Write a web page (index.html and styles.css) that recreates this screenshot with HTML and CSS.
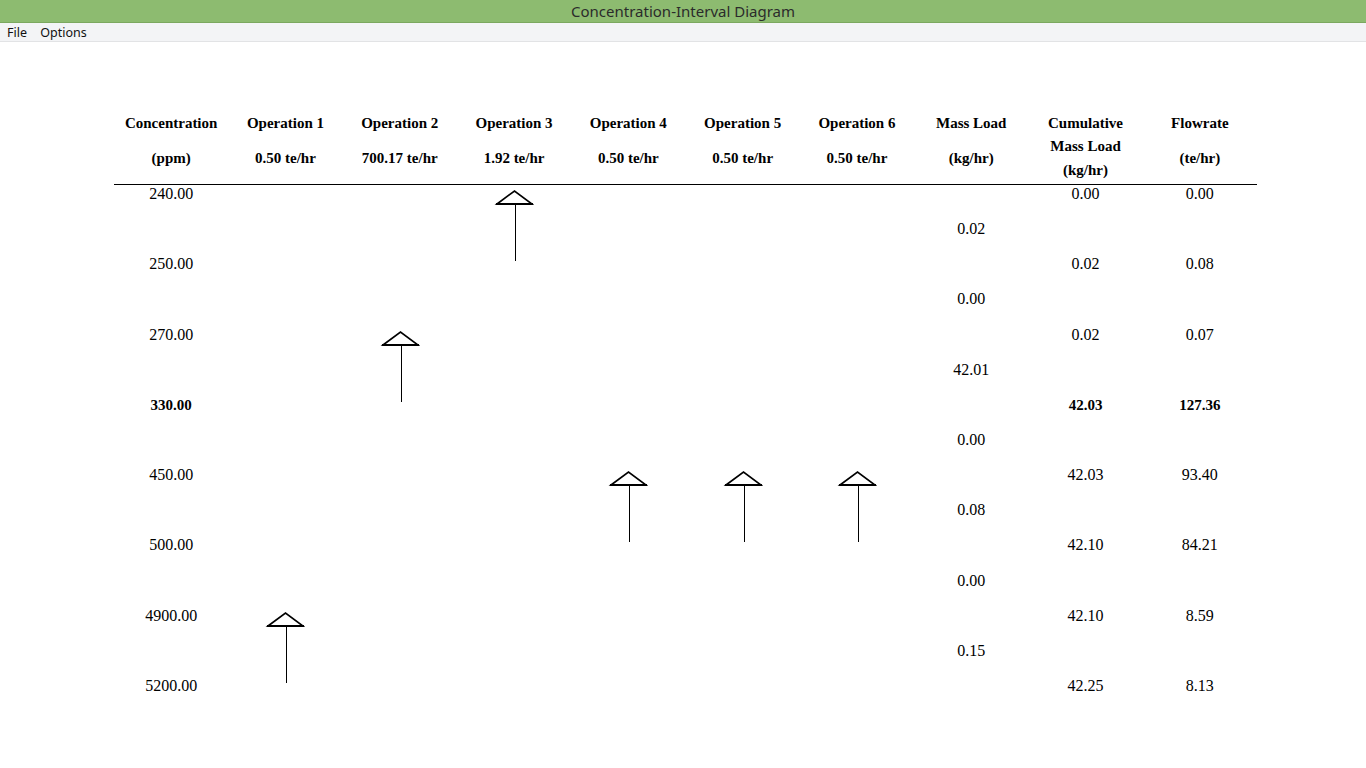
FILE: index.html
```html
<!DOCTYPE html>
<html>
  <head>
    <meta charset="utf-8">
    <meta name="viewport" content="width=device-width, initial-scale=1">
    <title>Concentration-Interval Diagram</title>
    <link rel="stylesheet" href="styles.css">
  </head>
  <body>
    <div class="titlebar">Concentration-Interval Diagram</div>
    <div class="menubar">
      <span class="menu_item">File</span>
      <span class="menu_item">Options</span>
    </div>

    <div class="diagram">
      <!-- header -->
      <div class="diagram_head">
        <div class="hd"><div class="hd_top">Concentration</div><div class="hd_sub">(ppm)</div></div>
        <div class="hd"><div class="hd_top">Operation 1</div><div class="hd_sub">0.50 te/hr</div></div>
        <div class="hd"><div class="hd_top">Operation 2</div><div class="hd_sub">700.17 te/hr</div></div>
        <div class="hd"><div class="hd_top">Operation 3</div><div class="hd_sub">1.92 te/hr</div></div>
        <div class="hd"><div class="hd_top">Operation 4</div><div class="hd_sub">0.50 te/hr</div></div>
        <div class="hd"><div class="hd_top">Operation 5</div><div class="hd_sub">0.50 te/hr</div></div>
        <div class="hd"><div class="hd_top">Operation 6</div><div class="hd_sub">0.50 te/hr</div></div>
        <div class="hd"><div class="hd_top">Mass Load</div><div class="hd_sub">(kg/hr)</div></div>
        <div class="hd"><div class="hd_top">Cumulative</div><div class="hd_sub tight">Mass Load<br>(kg/hr)</div></div>
        <div class="hd"><div class="hd_top">Flowrate</div><div class="hd_sub">(te/hr)</div></div>
      </div>

      <!-- intervals -->
      <div class="diagram_grid">
        <div class="cell k-conc r1">240.00</div>
        <div class="cell k-cum r1">0.00</div>
        <div class="cell k-flow r1">0.00</div>
        <div class="cell k-mass r2">0.02</div>

        <div class="cell k-conc r3">250.00</div>
        <div class="cell k-cum r3">0.02</div>
        <div class="cell k-flow r3">0.08</div>
        <div class="cell k-mass r4">0.00</div>

        <div class="cell k-conc r5">270.00</div>
        <div class="cell k-cum r5">0.02</div>
        <div class="cell k-flow r5">0.07</div>
        <div class="cell k-mass r6">42.01</div>

        <div class="cell k-conc r7 pinch">330.00</div>
        <div class="cell k-cum r7 pinch">42.03</div>
        <div class="cell k-flow r7 pinch">127.36</div>
        <div class="cell k-mass r8">0.00</div>

        <div class="cell k-conc r9">450.00</div>
        <div class="cell k-cum r9">42.03</div>
        <div class="cell k-flow r9">93.40</div>
        <div class="cell k-mass r10">0.08</div>

        <div class="cell k-conc r11">500.00</div>
        <div class="cell k-cum r11">42.10</div>
        <div class="cell k-flow r11">84.21</div>
        <div class="cell k-mass r12">0.00</div>

        <div class="cell k-conc r13">4900.00</div>
        <div class="cell k-cum r13">42.10</div>
        <div class="cell k-flow r13">8.59</div>
        <div class="cell k-mass r14">0.15</div>

        <div class="cell k-conc r15">5200.00</div>
        <div class="cell k-cum r15">42.25</div>
        <div class="cell k-flow r15">8.13</div>

        <!-- operation streams -->
        <div class="arrow op1 r13">
          <svg width="40" height="72" viewBox="0 0 40 72"><polygon points="3,14 20.5,1 38,14" fill="#fff" stroke="#000" stroke-width="1.6"/><line x1="2" y1="14" x2="39" y2="14" stroke="#000" stroke-width="2"/><line x1="21" y1="15" x2="21" y2="71" stroke="#000" stroke-width="1" shape-rendering="crispEdges"/></svg>
        </div>
        <div class="arrow op2 r5">
          <svg width="40" height="72" viewBox="0 0 40 72"><polygon points="3,14 20.5,1 38,14" fill="#fff" stroke="#000" stroke-width="1.6"/><line x1="2" y1="14" x2="39" y2="14" stroke="#000" stroke-width="2"/><line x1="21" y1="15" x2="21" y2="71" stroke="#000" stroke-width="1" shape-rendering="crispEdges"/></svg>
        </div>
        <div class="arrow op3 r1">
          <svg width="40" height="72" viewBox="0 0 40 72"><polygon points="3,14 20.5,1 38,14" fill="#fff" stroke="#000" stroke-width="1.6"/><line x1="2" y1="14" x2="39" y2="14" stroke="#000" stroke-width="2"/><line x1="21" y1="15" x2="21" y2="71" stroke="#000" stroke-width="1" shape-rendering="crispEdges"/></svg>
        </div>
        <div class="arrow op4 r9">
          <svg width="40" height="72" viewBox="0 0 40 72"><polygon points="3,14 20.5,1 38,14" fill="#fff" stroke="#000" stroke-width="1.6"/><line x1="2" y1="14" x2="39" y2="14" stroke="#000" stroke-width="2"/><line x1="21" y1="15" x2="21" y2="71" stroke="#000" stroke-width="1" shape-rendering="crispEdges"/></svg>
        </div>
        <div class="arrow op5 r9">
          <svg width="40" height="72" viewBox="0 0 40 72"><polygon points="3,14 20.5,1 38,14" fill="#fff" stroke="#000" stroke-width="1.6"/><line x1="2" y1="14" x2="39" y2="14" stroke="#000" stroke-width="2"/><line x1="21" y1="15" x2="21" y2="71" stroke="#000" stroke-width="1" shape-rendering="crispEdges"/></svg>
        </div>
        <div class="arrow op6 r9">
          <svg width="40" height="72" viewBox="0 0 40 72"><polygon points="3,14 20.5,1 38,14" fill="#fff" stroke="#000" stroke-width="1.6"/><line x1="2" y1="14" x2="39" y2="14" stroke="#000" stroke-width="2"/><line x1="21" y1="15" x2="21" y2="71" stroke="#000" stroke-width="1" shape-rendering="crispEdges"/></svg>
        </div>
      </div>
    </div>
  </body>
</html>
```

FILE: styles.css
```css
html, body{
  margin: 0;
  padding: 0;
  width: 100%;
  height: 100%;
  background-color: #FFFFFF;
}
.titlebar{
  height: 22px;
  line-height: 22px;
  background-color: #8DBB70;
  border-bottom: 1px solid #7BA85F;
  text-align: center;
  font-family: "Noto Sans", sans-serif;
  font-size: 15px;
  color: #2B2B2B;
}
.menubar{
  height: 18px;
  line-height: 19px;
  background-color: #F3F4F6;
  border-bottom: 1px solid #E2E3E5;
  padding-left: 7px;
  font-family: "Noto Sans", sans-serif;
  font-size: 12.5px;
  color: #111111;
}
.menu_item{
  margin-right: 10px;
}
.diagram{
  margin-left: 114px;
  width: 1143px;
  font-family: "Liberation Serif", serif;
  color: #000000;
}
.diagram_head{
  display: grid;
  grid-template-columns: repeat(10, 114.3px);
  height: 73px;
  padding-top: 69px;
  border-bottom: 1px solid #000000;
  font-size: 15px;
  font-weight: bold;
  text-align: center;
}
.hd_top{
  line-height: 24px;
}
.hd_sub{
  margin-top: 11px;
  line-height: 24px;
}
.hd_sub.tight{
  margin-top: 0;
  line-height: 23.5px;
}
.diagram_grid{
  display: grid;
  grid-template-columns: repeat(10, 114.3px);
  grid-template-rows: repeat(15, 35.15px);
}
.cell{
  padding-top: 1px;
  font-size: 16px;
  line-height: 16px;
  text-align: center;
}
.cell.pinch{
  font-size: 15px;
  font-weight: bold;
}
.k-conc{ grid-column: 1; }
.k-mass{ grid-column: 8; }
.k-cum{ grid-column: 9; }
.k-flow{ grid-column: 10; }

.op1{ grid-column: 2; }
.op2{ grid-column: 3; }
.op3{ grid-column: 4; }
.op4{ grid-column: 5; }
.op5{ grid-column: 6; }
.op6{ grid-column: 7; }

.r1{ grid-row-start: 1; }
.r2{ grid-row-start: 2; }
.r3{ grid-row-start: 3; }
.r4{ grid-row-start: 4; }
.r5{ grid-row-start: 5; }
.r6{ grid-row-start: 6; }
.r7{ grid-row-start: 7; }
.r8{ grid-row-start: 8; }
.r9{ grid-row-start: 9; }
.r10{ grid-row-start: 10; }
.r11{ grid-row-start: 11; }
.r12{ grid-row-start: 12; }
.r13{ grid-row-start: 13; }
.r14{ grid-row-start: 14; }
.r15{ grid-row-start: 15; }

.arrow{
  grid-row-end: span 3;
  justify-self: center;
  align-self: start;
  margin-top: 5px;
}
.arrow svg{
  display: block;
}
```
